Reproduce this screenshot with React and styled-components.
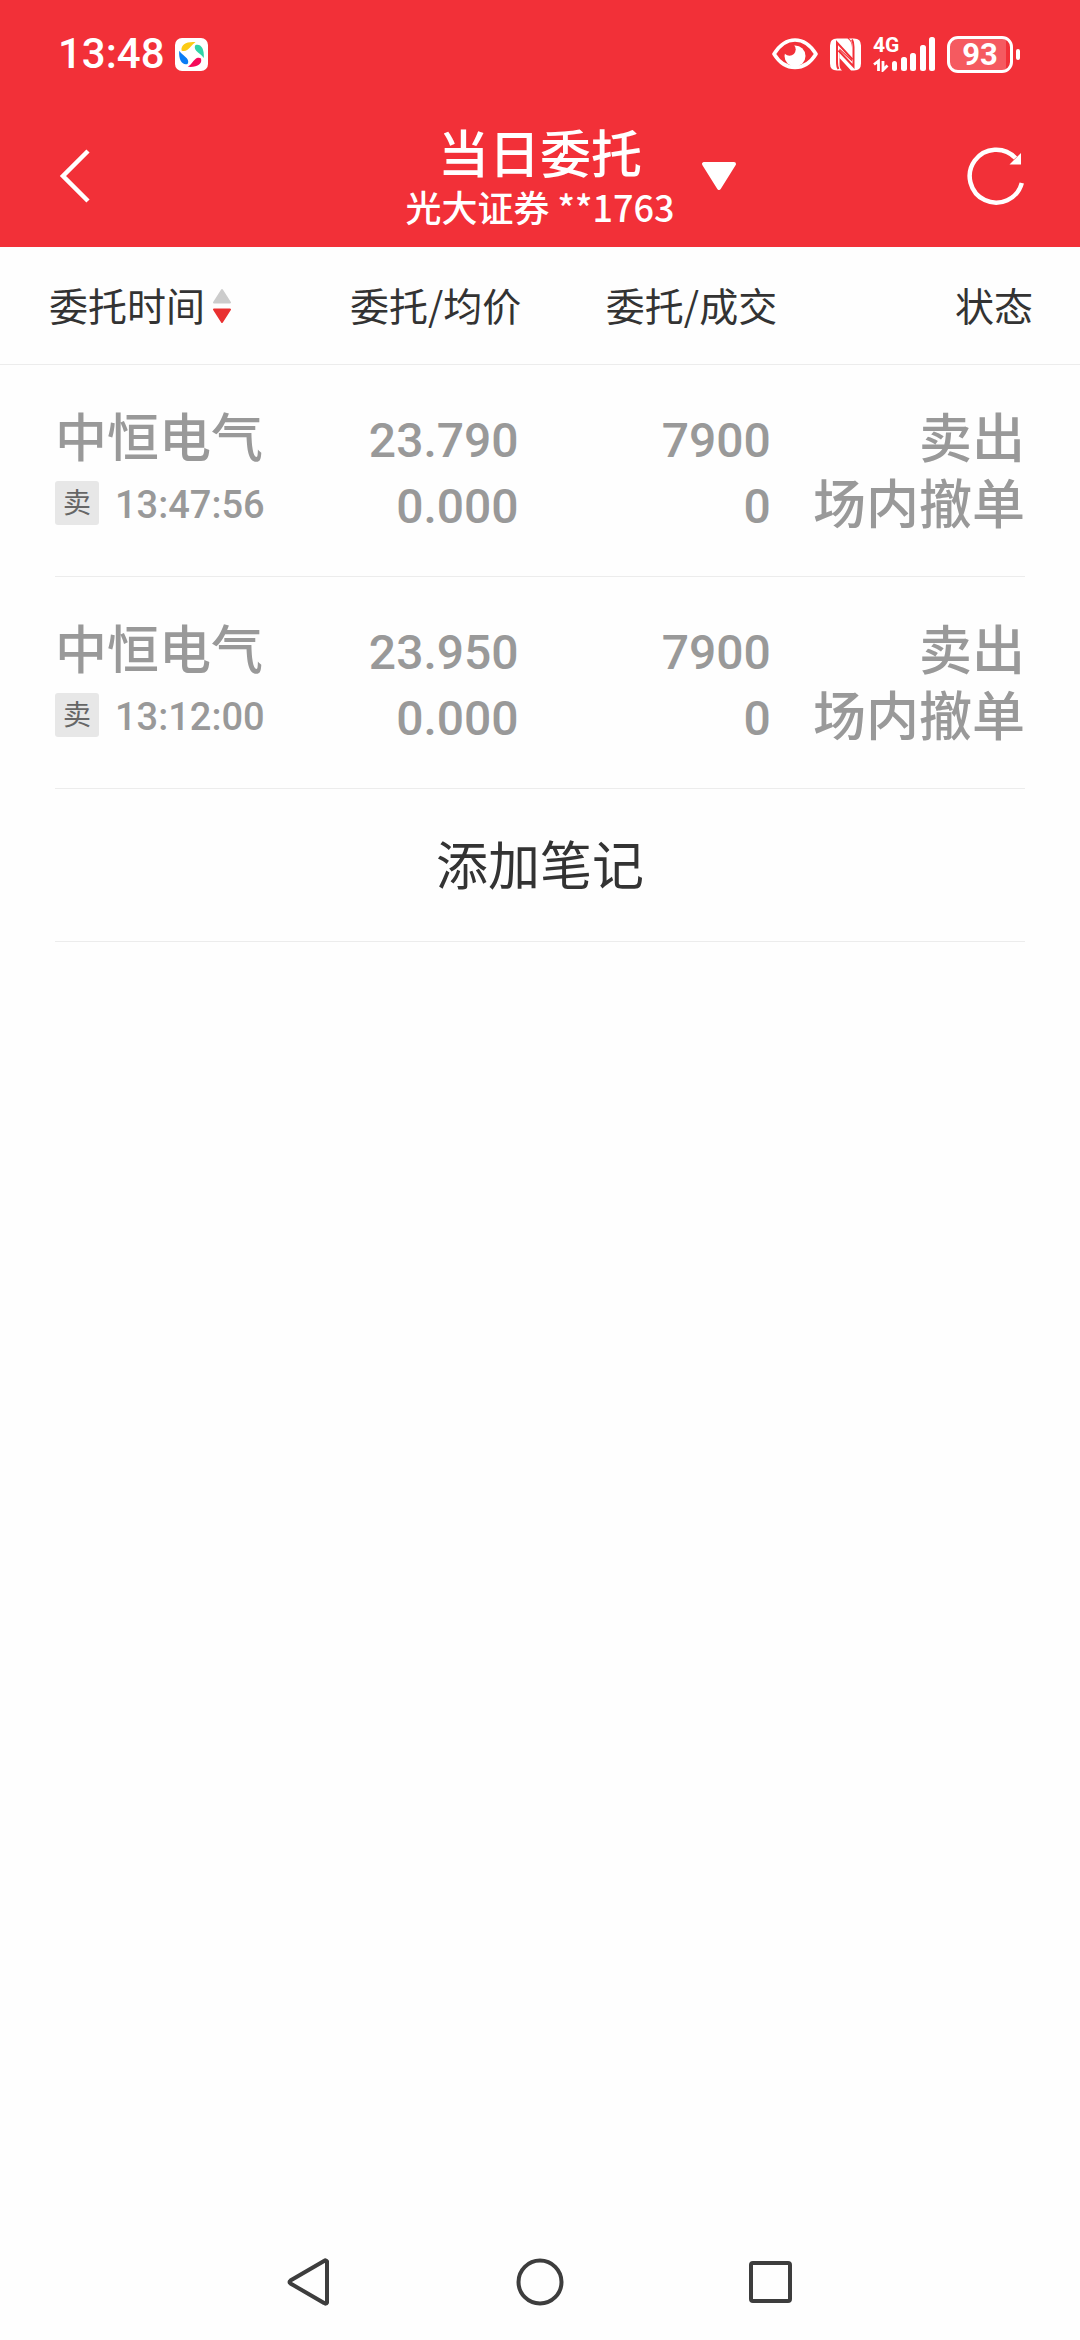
import styled, { createGlobalStyle } from "styled-components";

const GlobalStyle = createGlobalStyle`
  * {
    box-sizing: border-box;
  }

  body {
    margin: 0;
    background-color: #fefefe;
    color: #333;
    font-family: "Noto Sans CJK SC", "Noto Sans", sans-serif;
  }

  button {
    padding: 0;
    border: 0;
    background: none;
    color: inherit;
    font: inherit;
  }

  svg {
    display: block;
  }
`;

const Page = styled.div`
  min-height: 100vh;
  display: flex;
  flex-direction: column;
`;

const Header = styled.header`
  background-color: #f23038;
  color: white;
`;

const StatusBar = styled.div`
  height: 108px;
  padding: 0 60px 0 58px;
  display: flex;
  align-items: center;
  justify-content: space-between;
`;

const StatusGroup = styled.div`
  display: flex;
  align-items: center;
  gap: ${({ $gap }) => $gap}px;
`;

const Clock = styled.time`
  font-family: Roboto, sans-serif;
  font-size: 42px;
  font-weight: 500;
  line-height: 48px;
`;

const Signal = styled.div`
  display: grid;
  width: 62px;
  height: 36px;
`;

const SignalBars = styled.svg`
  grid-area: 1 / 1;
`;

const Network = styled.span`
  grid-area: 1 / 1;
  font-family: Roboto, sans-serif;
  font-size: 21px;
  font-weight: 700;
  line-height: 18px;
`;

const Battery = styled.div`
  display: flex;
  align-items: center;
  gap: 3px;

  &::after {
    content: "";
    width: 4px;
    height: 11px;
    border-radius: 2px;
    background-color: white;
  }
`;

const BatteryLevel = styled.span`
  width: 66px;
  height: 37px;
  border: 3px solid white;
  border-radius: 11px;
  background: linear-gradient(to right, #f55a60 93%, #f23038 93%);
  font-family: Roboto, sans-serif;
  font-size: 31px;
  font-weight: 700;
  line-height: 31px;
  text-align: center;
`;

const TitleBar = styled.div`
  height: 139px;
  padding: 0 53px 3px;
  display: grid;
  grid-template-columns: 1fr auto 1fr;
  align-items: center;
`;

const BackButton = styled.button`
  justify-self: start;
  padding-left: 6px;
`;

const TitleBlock = styled.div`
  padding-top: 4px;
  text-align: center;
`;

const Title = styled.h1`
  margin: 0;
  font-size: 51px;
  font-weight: 500;
  line-height: 56px;
`;

const Account = styled.p`
  margin: 0;
  font-size: 36px;
  font-weight: 500;
  line-height: 54px;
`;

const TitleActions = styled.div`
  padding-left: 26px;
  display: flex;
  align-items: center;
  justify-content: space-between;
`;

const Main = styled.main`
  flex: 1;
`;

const Orders = styled.table`
  display: block;
  width: 100%;

  thead,
  tbody {
    display: block;
  }
`;

const Row = styled.tr`
  display: grid;
  grid-template-columns: 46fr 50fr 52fr 52fr;
`;

const HeadRow = styled(Row)`
  height: 118px;
  padding: 0 47px 0 49px;
  align-items: center;
  border-bottom: 1px solid #ececec;
`;

const HeadCell = styled.th`
  padding: 0 0 4px;
  font-size: 39px;
  font-weight: 400;
  line-height: 48px;
  text-align: right;
  white-space: nowrap;
`;

const SortButton = styled.button`
  display: flex;
  align-items: center;
  gap: 2px;

  svg {
    margin-top: 4px;
  }
`;

const OrderRow = styled(Row)`
  margin: 0 55px;
  padding-top: 37px;
  border-bottom: 1px solid #ececec;
  color: #999;
`;

const Cell = styled.td`
  padding: 0 0 42px;
  font-size: 52px;
  font-weight: 500;
  line-height: 66px;
  text-align: ${({ $align }) => $align || "right"};
  white-space: nowrap;
`;

const NumberCell = styled(Cell)`
  padding: 6px 2px 36px 0;
  font-family: Roboto, sans-serif;
  font-size: 48px;
`;

const StatusCell = styled(Cell)`
  font-size: 53px;
`;

const Line = styled.div``;

const TimeLine = styled(Line)`
  height: 66px;
  padding-top: 4px;
  display: flex;
  align-items: center;
  gap: 16px;
`;

const Badge = styled.span`
  width: 44px;
  height: 44px;
  padding-bottom: 3px;
  border-radius: 3px;
  background-color: #e7e7e7;
  color: #666;
  font-size: 28px;
  font-weight: 400;
  line-height: 41px;
  text-align: center;
`;

const Time = styled.time`
  padding-top: 4px;
  font-family: Roboto, sans-serif;
  font-size: 38px;
  line-height: 48px;
`;

const NoteRow = styled.div`
  margin: 0 55px;
  border-bottom: 1px solid #ececec;
`;

const NoteButton = styled.button`
  display: block;
  width: 100%;
  height: 152px;
  padding-bottom: 6px;
  font-size: 52px;
`;

const SystemNav = styled.nav`
  height: 116px;
  display: flex;
  align-items: center;
  justify-content: center;
  gap: 183px;
`;

const orders = [
  {
    name: "中恒电气",
    side: "卖",
    time: "13:47:56",
    price: "23.790",
    average: "0.000",
    amount: "7900",
    filled: "0",
    action: "卖出",
    status: "场内撤单",
  },
  {
    name: "中恒电气",
    side: "卖",
    time: "13:12:00",
    price: "23.950",
    average: "0.000",
    amount: "7900",
    filled: "0",
    action: "卖出",
    status: "场内撤单",
  },
];

function AppIcon() {
  return (
    <svg width="33" height="33" viewBox="0 0 33 33">
      <rect width="33" height="33" rx="7" fill="white" />
      <path d="M6.500 12.500C6 7 11 3.500 20.500 4.200C17 6.500 15.500 9.500 12.500 11.800C10.500 13.300 8 13.500 6.500 12.500Z" fill="#fccb14" />
      <path d="M20.500 7C25.500 5.500 29.500 10 28.800 20C26.500 16.500 23.500 15.500 21.200 12.800C19.600 10.800 19.300 8.500 20.500 7Z" fill="#2fd3a8" />
      <path d="M26 20.500C27.500 26 22.500 29.500 12.800 28.800C16.500 26.500 17.500 23.500 20.200 21.200C22 19.700 24.500 19.300 26 20.500Z" fill="#f5095a" />
      <path d="M12.500 26C7.500 27.500 3.500 22.500 4.200 12.800C6.500 16.500 9.500 17.500 11.800 20.200C13.400 22.200 13.700 24.500 12.500 26Z" fill="#0a7cf5" />
    </svg>
  );
}

function EyeIcon() {
  return (
    <svg width="46" height="32" viewBox="0 0 46 32">
      <circle cx="23" cy="18" r="10.500" fill="white" />
      <circle cx="17.500" cy="11.500" r="6.200" fill="#f23038" />
      <path
        d="M2 16C7 8 14.500 2 23 2S39 8 44 16C39 24 31.500 29.500 23 29.500S7 24 2 16Z"
        fill="none"
        stroke="white"
        strokeWidth="3.600"
        strokeLinejoin="round"
      />
    </svg>
  );
}

function NfcIcon() {
  return (
    <svg width="31" height="33" viewBox="0 0 31 33">
      <path d="M7 .5H17.500C21 3 22 6 22 10V22L9.500 10.500V25C9.500 29 10 31 12 32.500H7Q0 32.500 0 25.500V7.500Q0 .5 7 .5Z" fill="white" />
      <path d="M24 .5Q31 .5 31 7.500V25.500Q31 32.500 24 32.500H21L9.500 20V12L22 23.500V8C22 4 21 2 19 .5Z" fill="white" />
      <path d="M8.500 31C7 29 7 27 7 24V4.500L22.500 21.500" fill="none" stroke="#f23038" strokeWidth="2" />
      <path d="M22 1.500C23.500 4 23.500 6 23.500 9V28.500L8.500 12.500" fill="none" stroke="#f23038" strokeWidth="2" />
    </svg>
  );
}

function SignalIcon() {
  return (
    <SignalBars width="62" height="36" viewBox="0 0 62 36">
      <g fill="white">
        <rect x="19" y="25" width="5" height="10" rx="2.500" />
        <rect x="28" y="21" width="6" height="14" rx="2.500" />
        <rect x="37" y="17" width="6" height="18" rx="2.500" />
        <rect x="47" y="9" width="6" height="26" rx="2.500" />
        <rect x="56" y="1" width="6" height="34" rx="2.500" />
      </g>
      <path d="M1 28.500L5.500 25V35M10 25V34L14.500 29.500" fill="none" stroke="white" strokeWidth="2.800" />
    </SignalBars>
  );
}

function SortIcon() {
  return (
    <svg width="30" height="36" viewBox="0 0 30 36">
      <path d="M15 2L23 14.500H7Z" fill="#ccc" stroke="#ccc" strokeWidth="2" strokeLinejoin="round" />
      <path d="M15 34L23 21.500H7Z" fill="#e93030" stroke="#e93030" strokeWidth="2" strokeLinejoin="round" />
    </svg>
  );
}

export default function App() {
  return (
    <Page>
      <GlobalStyle />
      <Header>
        <StatusBar>
          <StatusGroup $gap={10}>
            <Clock>13:48</Clock>
            <AppIcon />
          </StatusGroup>
          <StatusGroup $gap={12}>
            <EyeIcon />
            <NfcIcon />
            <Signal>
              <Network>4G</Network>
              <SignalIcon />
            </Signal>
            <Battery>
              <BatteryLevel>93</BatteryLevel>
            </Battery>
          </StatusGroup>
        </StatusBar>
        <TitleBar>
          <BackButton type="button" aria-label="返回">
            <svg width="32" height="56" viewBox="0 0 32 56">
              <path d="M29 3L4 28L29 53" fill="none" stroke="white" strokeWidth="4.500" />
            </svg>
          </BackButton>
          <TitleBlock>
            <Title>当日委托</Title>
            <Account>光大证券 **1763</Account>
          </TitleBlock>
          <TitleActions>
            <button type="button" aria-label="切换账户">
              <svg width="36" height="30" viewBox="0 0 36 30">
                <path d="M3 3H33L18 27Z" fill="white" stroke="white" strokeWidth="4" strokeLinejoin="round" />
              </svg>
            </button>
            <button type="button" aria-label="刷新">
              <svg width="60" height="60" viewBox="0 0 60 60">
                <path d="M54.800 37A26.500 26.500 0 1 1 48.500 12" fill="none" stroke="white" strokeWidth="4.500" />
                <path d="M54 7V18.500H42.500Z" fill="white" />
              </svg>
            </button>
          </TitleActions>
        </TitleBar>
      </Header>

      <Main>
        <Orders>
          <thead>
            <HeadRow>
              <HeadCell scope="col">
                <SortButton type="button">
                  委托时间
                  <SortIcon />
                </SortButton>
              </HeadCell>
              <HeadCell scope="col">委托/均价</HeadCell>
              <HeadCell scope="col">委托/成交</HeadCell>
              <HeadCell scope="col">状态</HeadCell>
            </HeadRow>
          </thead>
          <tbody>
            {orders.map((order) => (
              <OrderRow key={order.time}>
                <Cell $align="left">
                  <Line>{order.name}</Line>
                  <TimeLine>
                    <Badge>{order.side}</Badge>
                    <Time>{order.time}</Time>
                  </TimeLine>
                </Cell>
                <NumberCell>
                  <Line>{order.price}</Line>
                  <Line>{order.average}</Line>
                </NumberCell>
                <NumberCell>
                  <Line>{order.amount}</Line>
                  <Line>{order.filled}</Line>
                </NumberCell>
                <StatusCell>
                  <Line>{order.action}</Line>
                  <Line>{order.status}</Line>
                </StatusCell>
              </OrderRow>
            ))}
          </tbody>
        </Orders>
        <NoteRow>
          <NoteButton type="button">添加笔记</NoteButton>
        </NoteRow>
      </Main>

      <SystemNav>
        <button type="button" aria-label="后退">
          <svg width="48" height="48" viewBox="0 0 48 48">
            <path d="M42 3.500V44.500Q41 46.500 39 45L5.500 25.500Q3.500 24 5.500 22.500L39 3Q41 1.500 42 3.500Z" fill="none" stroke="#3d3d3d" strokeWidth="4" />
          </svg>
        </button>
        <button type="button" aria-label="主页">
          <svg width="48" height="48" viewBox="0 0 48 48">
            <circle cx="24" cy="24" r="21.500" fill="none" stroke="#3d3d3d" strokeWidth="4" />
          </svg>
        </button>
        <button type="button" aria-label="最近任务">
          <svg width="48" height="48" viewBox="0 0 48 48">
            <rect x="4" y="5" width="39" height="38" rx="2" fill="none" stroke="#3d3d3d" strokeWidth="4" />
          </svg>
        </button>
      </SystemNav>
    </Page>
  );
}
